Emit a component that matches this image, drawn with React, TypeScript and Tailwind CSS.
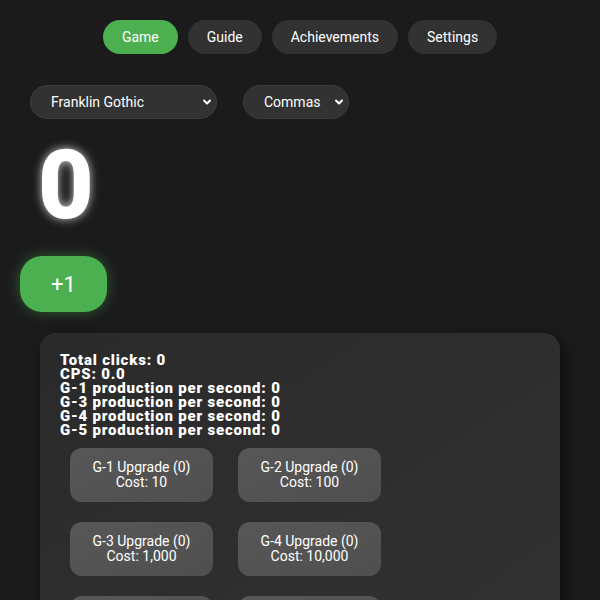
import { ChevronDown } from "lucide-react";

const tabs = ["Game", "Guide", "Achievements", "Settings"];

const stats = [
  "Total clicks: 0",
  "CPS: 0.0",
  "G-1 production per second: 0",
  "G-3 production per second: 0",
  "G-4 production per second: 0",
  "G-5 production per second: 0",
];

const upgrades = [
  { name: "G-1", cost: "10" },
  { name: "G-2", cost: "100" },
  { name: "G-3", cost: "1,000" },
  { name: "G-4", cost: "10,000" },
  { name: "G-5", cost: "100,000" },
  { name: "G-6", cost: "1,000,000" },
];

function Select({ label, width }: { label: string; width: string }) {
  return (
    <div className={`${width} h-[34px] flex items-center justify-between pl-5 pr-[3px] rounded-full bg-[#323232] border border-[#3c3c3c] text-[14px] text-white`}>
      <span>{label}</span>
      <ChevronDown size={12} strokeWidth={4} />
    </div>
  );
}

export default function App() {
  return (
    <div className="h-[600px] bg-[#1b1b1b] text-white px-5 pt-5 font-['Roboto',sans-serif] overflow-hidden">
      <nav className="flex justify-center gap-[10px]">
        {tabs.map((t, i) => (
          <button
            key={t}
            className={`h-[34px] px-[19px] rounded-full text-[14px] ${i === 0 ? "bg-[#4caf50]" : "bg-[#323232]"}`}
          >
            {t}
          </button>
        ))}
      </nav>

      <div className="flex gap-[26px] mt-[31px] ml-[10px]">
        <Select label="Franklin Gothic" width="w-[187px]" />
        <Select label="Commas" width="w-[106px]" />
      </div>

      <div className="mt-[10px] ml-[18px] h-[112px] flex items-center text-[96px] font-black leading-none [text-shadow:0_0_10px_rgba(255,255,255,0.8)]">
        0
      </div>

      <button className="mt-[15px] w-[87px] h-[56px] rounded-[22px] bg-[#4caf50] text-[22px] shadow-[0_0_14px_rgba(76,175,80,0.45)]">
        +1
      </button>

      <div className="mt-[21px] mx-5 rounded-[16px] bg-gradient-to-br from-[#2a2a2a] to-[#323232] shadow-[4px_4px_12px_rgba(0,0,0,0.5)] pt-5 px-5 pb-5">
        <div className="font-black text-[15px] leading-[14px] tracking-[0.8px]">
          {stats.map((s) => (
            <div key={s}>{s}</div>
          ))}
        </div>
        <div className="mt-[1px] w-[340px] flex flex-wrap">
          {upgrades.map((u) => (
            <button
              key={u.name}
              className="m-[10px] mr-[15px] w-[143px] h-[54px] rounded-[12px] bg-gradient-to-br from-[#575757] to-[#4f4f4f] text-[14px] leading-[15px] text-white"
            >
              <div>{u.name} Upgrade (0)</div>
              <div>Cost: {u.cost}</div>
            </button>
          ))}
        </div>
      </div>
    </div>
  );
}
